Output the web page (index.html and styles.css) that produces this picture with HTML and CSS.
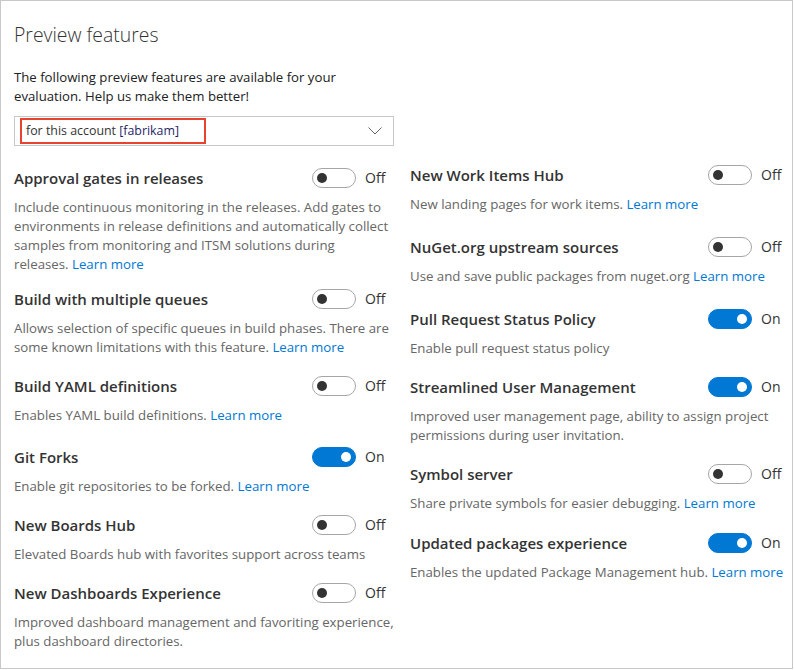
FILE: index.html
```html
<!DOCTYPE html>
<html lang="en">
<head>
<meta charset="utf-8">
<title>Preview features</title>
<link rel="stylesheet" href="styles.css">
</head>
<body>
<div class="frame">
  <h1 class="heading">Preview features</h1>
  <p class="intro">The following preview features are available for your<br>evaluation. Help us make them better!</p>
  <div class="dropdown">
    <span class="scope">for this account <span class="acct">[fabrikam]</span></span>
    <svg class="chev" width="14" height="8" viewBox="0 0 14 8"><polyline points="0.5,0.5 7,7 13.5,0.5" fill="none" stroke="#666" stroke-width="1"/></svg>
  </div>
  <div class="cols">
    <div class="col col-left">
      <div class="item">
        <div class="head"><span class="title">Approval gates in releases</span><span class="toggle"></span><span class="state">Off</span></div>
        <p class="desc">Include continuous monitoring in the releases. Add gates to environments in release definitions and automatically collect samples from monitoring and ITSM solutions during<br>releases. <a href="#">Learn more</a></p>
      </div>
      <div class="item">
        <div class="head"><span class="title">Build with multiple queues</span><span class="toggle"></span><span class="state">Off</span></div>
        <p class="desc">Allows selection of specific queues in build phases. There are some known limitations with this feature. <a href="#">Learn more</a></p>
      </div>
      <div class="item">
        <div class="head"><span class="title">Build YAML definitions</span><span class="toggle"></span><span class="state">Off</span></div>
        <p class="desc">Enables YAML build definitions. <a href="#">Learn more</a></p>
      </div>
      <div class="item">
        <div class="head"><span class="title">Git Forks</span><span class="toggle on"></span><span class="state">On</span></div>
        <p class="desc">Enable git repositories to be forked. <a href="#">Learn more</a></p>
      </div>
      <div class="item">
        <div class="head"><span class="title">New Boards Hub</span><span class="toggle"></span><span class="state">Off</span></div>
        <p class="desc">Elevated Boards hub with favorites support across teams</p>
      </div>
      <div class="item">
        <div class="head"><span class="title">New Dashboards Experience</span><span class="toggle"></span><span class="state">Off</span></div>
        <p class="desc">Improved dashboard management and favoriting experience, plus dashboard directories.</p>
      </div>
    </div>
    <div class="col col-right">
      <div class="item">
        <div class="head"><span class="title">New Work Items Hub</span><span class="toggle"></span><span class="state">Off</span></div>
        <p class="desc">New landing pages for work items. <a href="#">Learn more</a></p>
      </div>
      <div class="item">
        <div class="head"><span class="title">NuGet.org upstream sources</span><span class="toggle"></span><span class="state">Off</span></div>
        <p class="desc">Use and save public packages from nuget.org <a href="#">Learn more</a></p>
      </div>
      <div class="item">
        <div class="head"><span class="title">Pull Request Status Policy</span><span class="toggle on"></span><span class="state">On</span></div>
        <p class="desc">Enable pull request status policy</p>
      </div>
      <div class="item">
        <div class="head"><span class="title">Streamlined User Management</span><span class="toggle on"></span><span class="state">On</span></div>
        <p class="desc">Improved user management page, ability to assign project permissions during user invitation.</p>
      </div>
      <div class="item">
        <div class="head"><span class="title">Symbol server</span><span class="toggle"></span><span class="state">Off</span></div>
        <p class="desc">Share private symbols for easier debugging. <a href="#">Learn more</a></p>
      </div>
      <div class="item">
        <div class="head"><span class="title">Updated packages experience</span><span class="toggle on"></span><span class="state">On</span></div>
        <p class="desc">Enables the updated Package Management hub. <a href="#">Learn more</a></p>
      </div>
    </div>
  </div>
</div>
</body>
</html>
```

FILE: styles.css
```css
html, body {
  margin: 0;
  padding: 0;
  background: #ffffff;
}

body {
  font-family: "Open Sans", "Noto Sans", "Liberation Sans", sans-serif;
  color: #333333;
}

.frame {
  box-sizing: border-box;
  width: 793px;
  height: 669px;
  border: 1px solid #c8c8c8;
  padding: 20px 0 0 13px;
  overflow: hidden;
}

.heading {
  margin: 0;
  font-size: 19.4px;
  font-weight: 300;
  line-height: 28px;
  color: #333333;
}

.intro {
  margin: 19px 0 0 0;
  font-size: 13.2px;
  line-height: 19px;
  color: #212121;
}

.dropdown {
  box-sizing: border-box;
  width: 380px;
  height: 30px;
  margin-top: 10px;
  border: 1px solid #c8c8c8;
  display: flex;
  align-items: center;
  justify-content: space-between;
  padding: 0 11px 0 5px;
}

.scope {
  box-sizing: border-box;
  width: 186px;
  height: 26px;
  border: 2px solid #e8432e;
  padding: 0 0 0 4px;
  font-size: 12.4px;
  line-height: 22px;
  color: #333333;
  white-space: nowrap;
}

.acct {
  color: #1f1f66;
}

.chev {
  display: block;
}

.cols {
  display: grid;
  grid-template-columns: 387px 381px;
  column-gap: 9px;
  margin-top: 19px;
}

.col-left {
  padding-top: 3px;
}

.item {
  margin-bottom: 19px;
}

.col-left .item:nth-child(1) {
  margin-bottom: 15px;
}

.col-left .item:nth-child(3) {
  margin-bottom: 22px;
}

.col-right .item:nth-child(1),
.col-right .item:nth-child(2) {
  margin-bottom: 23px;
}

.col-right .item:nth-child(5) {
  margin-bottom: 20px;
}

.head {
  display: grid;
  grid-template-columns: 298px 44px auto;
  align-items: center;
  height: 20px;
}

.title {
  font-size: 15px;
  font-weight: 600;
  line-height: 20px;
  color: #333333;
  white-space: nowrap;
}

.toggle {
  box-sizing: border-box;
  position: relative;
  width: 44px;
  height: 20px;
  border: 1px solid #a6a6a6;
  border-radius: 10px;
  background: #ffffff;
}

.toggle::after {
  content: "";
  position: absolute;
  left: 4px;
  top: 4px;
  width: 10px;
  height: 10px;
  border-radius: 50%;
  background: #333333;
}

.toggle.on {
  background: #0078d4;
  border-color: #0078d4;
}

.toggle.on::after {
  left: auto;
  right: 4px;
  background: #ffffff;
}

.state {
  margin-left: 9px;
  font-size: 14px;
  line-height: 20px;
  color: #333333;
}

.desc {
  margin: 10px 0 0 0;
  font-size: 13.25px;
  line-height: 19px;
  color: #666666;
}

.desc a {
  color: #0078d4;
  text-decoration: none;
}
```
